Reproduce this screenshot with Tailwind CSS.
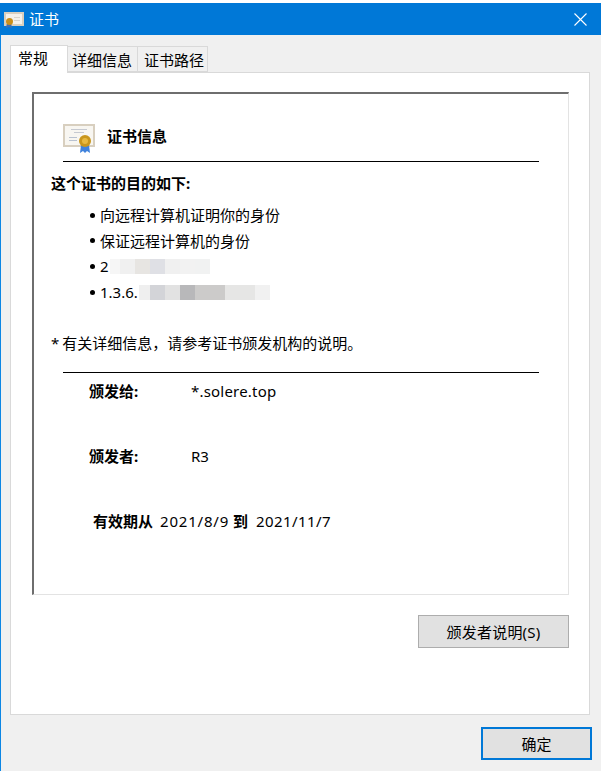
<!DOCTYPE html>
<html lang="zh-CN">
<head>
<meta charset="UTF-8">
<title>证书</title>
<script src="https://cdn.jsdelivr.net/npm/@tailwindcss/browser@4"></script>
</head>
<body class="bg-white">
<div class="w-[601px] h-[771px] flex flex-col overflow-hidden pt-[3px] text-[15px] leading-[20px] text-black font-['Noto_Sans','Noto_Sans_CJK_SC',sans-serif]">
  <!-- title bar -->
  <div class="h-[32px] shrink-0 bg-[#0078d7] flex items-center pl-[4px] text-white">
    <svg class="w-[20px] h-[16px] mt-[2px]" viewBox="0 0 20 16">
      <rect x="0" y="0" width="20" height="14" fill="#d9cfbd"/>
      <rect x="2" y="2" width="16" height="10" fill="#f4f1ea"/>
      <rect x="10" y="5" width="6" height="1" fill="#d8d4cb"/>
      <rect x="10" y="8" width="6" height="1" fill="#d8d4cb"/>
      <path d="M3 11l-1 5 3-1 3 1-1-5z" fill="#3b6fb5"/>
      <circle cx="5.5" cy="9.5" r="3.5" fill="#c98f1a"/>
    </svg>
    <span class="ml-[5px]">证书</span>
    <svg class="ml-auto mr-[14px] w-[13px] h-[13px]" viewBox="0 0 13 13" fill="none" stroke="#fff" stroke-width="1.1"><path d="M0.5 0.5l12 12M12.5 0.5l-12 12"/></svg>
  </div>

  <!-- dialog body -->
  <div class="flex-1 flex flex-col bg-[#f0f0f0] border-l border-l-[#0c86e4] pl-[9px] pr-[11px]">
    <!-- tabs -->
    <div class="h-[37px] shrink-0 flex items-end relative z-10">
      <div class="w-[58px] h-[28px] bg-white border border-[#d9d9d9] border-b-0 pl-[7px] pt-[2px] -mb-px">常规</div>
      <div class="w-[70px] h-[26px] bg-[#f0f0f0] border border-[#d9d9d9] border-l-0 pl-[4px] pt-[3px]">详细信息</div>
      <div class="w-[70px] h-[26px] bg-[#f0f0f0] border border-[#d9d9d9] border-l-0 pl-[6px] pt-[3px]">证书路径</div>
    </div>

    <!-- tab panel -->
    <div class="h-[643px] shrink-0 bg-white border border-[#d9d9d9] pt-[19px] pl-[21px] pr-[20px] flex flex-col">
      <!-- certificate box -->
      <div class="w-[537px] h-[503px] shrink-0 border-t-2 border-l-2 border-r border-b border-t-[#6e6e6e] border-l-[#6e6e6e] border-r-[#e3e3e3] border-b-[#e3e3e3] flex flex-col">
        <div class="flex items-center h-[30px] mt-[30px] ml-[29px]">
          <svg class="w-[33px] h-[30px] shrink-0" viewBox="0 0 33 30">
            <rect x="0" y="0" width="32" height="23" fill="#d8cfbf"/>
            <rect x="2" y="2" width="28" height="19" fill="#f8f6f1"/>
            <rect x="8" y="5" width="16" height="1" fill="#c6c9d0"/>
            <rect x="11" y="8" width="10" height="1" fill="#c6c9d0"/>
            <rect x="6" y="13" width="8" height="1" fill="#b9c2d0"/>
            <rect x="6" y="16" width="8" height="1" fill="#b9c2d0"/>
            <path d="M18 21l-1 8 3-2 2 2 2-2 3 2-1-8z" fill="#3f82dc"/>
            <circle cx="22" cy="17" r="6" fill="#c9961c"/>
            <circle cx="22" cy="17" r="3" fill="#e8b93f"/>
          </svg>
          <span class="ml-[11px] -mt-[7px] font-bold">证书信息</span>
        </div>
        <div class="h-px bg-black ml-[29px] w-[476px] mt-[7px]"></div>

        <div class="ml-[17px] mt-[11px] font-bold">这个证书的目的如下:</div>

        <ul class="ml-[56px] mt-[12px] flex flex-col gap-[5.7px]">
          <li class="flex items-center"><span class="w-[5px] h-[5px] rounded-full bg-black mr-[5px]"></span>向远程计算机证明你的身份</li>
          <li class="flex items-center"><span class="w-[5px] h-[5px] rounded-full bg-black mr-[5px]"></span>保证远程计算机的身份</li>
          <li class="flex items-center"><span class="w-[5px] h-[5px] rounded-full bg-black mr-[5px]"></span>2
            <!-- blurred out text -->
            <span class="flex h-[15px] ml-[1px]">
              <span class="w-[10px] bg-[#f6f6f6]"></span><span class="w-[15px] bg-[#f0f0f0]"></span><span class="w-[15px] bg-[#e7e5e2]"></span><span class="w-[15px] bg-[#dfe0e5]"></span><span class="w-[15px] bg-[#f0f0f0]"></span><span class="w-[15px] bg-[#f2f2f2]"></span><span class="w-[15px] bg-[#f1f2f2]"></span>
            </span>
          </li>
          <li class="flex items-center"><span class="w-[5px] h-[5px] rounded-full bg-black mr-[5px]"></span>1.3.6.
            <span class="flex h-[15px] ml-[1px]">
              <span class="w-[11px] bg-[#efefef]"></span><span class="w-[15px] bg-[#d3d4d8]"></span><span class="w-[15px] bg-[#e2e2e2]"></span><span class="w-[15px] bg-[#b8b8ba]"></span><span class="w-[30px] bg-[#cccbca]"></span><span class="w-[30px] bg-[#e6e6e5]"></span><span class="w-[15px] bg-[#f1f1f1]"></span>
            </span>
          </li>
        </ul>

        <div class="ml-[17px] mt-[31px]"><span class="mr-[3px]">*</span>有关详细信息&#65292;请参考证书颁发机构的说明。</div>
        <div class="h-px bg-black ml-[29px] w-[476px] mt-[19px]"></div>

        <div class="flex ml-[55px] mt-[8px]"><span class="w-[102px] font-bold">颁发给:</span><span class="tracking-[0.2px]">*.solere.top</span></div>
        <div class="flex ml-[55px] mt-[45px]"><span class="w-[102px] font-bold">颁发者:</span><span>R3</span></div>
        <div class="flex ml-[59px] mt-[45px]">
          <span class="font-bold">有效期从</span>
          <span class="ml-[7px] tracking-[0.8px]">2021/8/9</span>
          <span class="ml-[4px] font-bold">到</span>
          <span class="ml-[8px] tracking-[0.4px]">2021/11/7</span>
        </div>
      </div>

      <button class="self-end mt-[20px] w-[151px] h-[33px] bg-[#e1e1e1] border border-[#adadad] tracking-[0.2px]">颁发者说明(S)</button>
    </div>

    <!-- footer -->
    <div class="flex justify-end mt-[12px] -mr-[2px]">
      <button class="w-[111px] h-[33px] bg-[#e1e1e1] border-2 border-[#0078d7]">确定</button>
    </div>
  </div>
</div>
</body>
</html>
